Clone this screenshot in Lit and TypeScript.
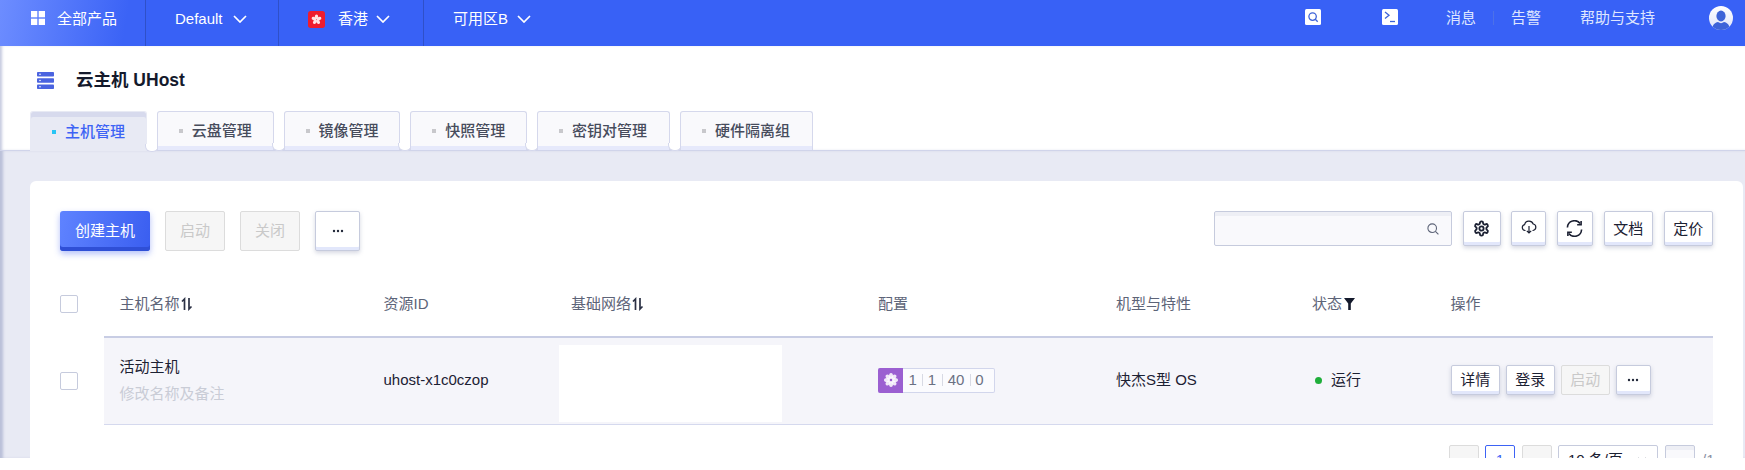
import { LitElement, html, css, svg } from "lit";
import { customElement } from "lit/decorators.js";

const chevron = html`<svg class="chev" width="14" height="8" viewBox="0 0 14 8"><path d="M1 1l6 6 6-6" fill="none" stroke="#fff" stroke-width="1.7"/></svg>`;
const sortIcon = html`<svg class="sort" width="12" height="14" viewBox="0 0 12 14"><path d="M3.5 13V2L1 4.5M8 1v11l2.500-2.500" fill="none" stroke="#2b3145" stroke-width="1.700"/></svg>`;
const dots = html`<svg width="12" height="4" viewBox="0 0 12 4"><circle cx="2" cy="2" r="1.2" fill="#22283a"/><circle cx="6" cy="2" r="1.2" fill="#22283a"/><circle cx="10" cy="2" r="1.2" fill="#22283a"/></svg>`;

const petals = [0, 45, 90, 135, 180, 225, 270, 315].map(
  (a) => svg`<ellipse cx="8" cy="4" rx="2" ry="3" fill="#fff" opacity=".85" transform="rotate(${a} 8 8)"/>`
);

@customElement("app-root")
export class AppRoot extends LitElement {
  static styles = css`
    :host { display: block; width: 100%; height: 470px; background: #fff; overflow: hidden;
      font-family: "Liberation Sans", "Noto Sans CJK SC", sans-serif; font-size: 15px; color: #1c2133; }
    * { box-sizing: border-box; }
    .clip { height: 458px; overflow: hidden; display: flex; flex-direction: column; }
    .top { height: 46px; flex: none; background: #3861f6; color: #fff; display: flex; align-items: stretch; line-height: 22px; }
    .cell { height: 46px; display: flex; align-items: center; padding-bottom: 8px; border-right: 1px solid #2f50c8; }
    .c1 { width: 146px; padding-left: 31px; gap: 12px; background: linear-gradient(100deg, #6d8dff, #3b63f6 85%); }
    .c1 svg { margin-bottom: 2px; }
    .c2 { width: 133px; padding-left: 29px; gap: 10px; }
    .c3 { width: 145px; padding-left: 29px; }
    .c3 .name { margin: 0 8px 0 13px; }
    .c4 { padding-left: 29px; gap: 9px; border-right: 0; }
    .chev { display: block; }
    .right { margin-left: auto; display: flex; align-items: center; padding: 0 12px 10px 0; color: #dfe6ff; }
    .right .i1, .right .i2 { margin-bottom: 2px; }
    .right .i1 { margin-right: 61px; }
    .right .i2 { margin-right: 48px; }
    .vsep { width: 1px; height: 14px; background: #4d71e8; margin: 0 17px; }
    .help { margin: 0 54px 0 39px; }
    .head { flex: none; height: 105px; background: #fff; padding: 0 0 0 30px; display: flex; flex-direction: column;
      border-bottom: 1px solid #d0d4ea; box-shadow: inset 3px 0 3px -1px #c5cadf; }
    .title { display: flex; align-items: center; height: 65px; padding: 3px 0 0 7px; font-size: 17.5px; font-weight: 700; color: #141a2c; gap: 22px; line-height: 24px; }
    .title svg { display: block; }
    .tabs { display: flex; gap: 10px; height: 39px; }
    .tab { position: relative; width: 116.75px; height: 39px; padding-left: 21px; display: flex; align-items: center; gap: 9px;
      background: #f9f9fc; border: 1px solid #d5d8ec; border-bottom: 0; border-radius: 3px 3px 0 0;
      box-shadow: inset 0 -4px 0 #e6e9fb; color: #474c5c; font-weight: 500; line-height: 22px; }
    .tab.w2 { width: 133px; }
    .tab::after { content: ""; position: absolute; left: 100%; bottom: -1px; width: 12px; height: 7px; margin-left: -1px; background: #fff;
      border: 1px solid #d5d8ec; border-top: 0; border-radius: 0 0 6px 6px; }
    .tab:last-child::after { display: none; }
    .tab .sq { width: 4px; height: 4px; background: #c8c8cc; }
    .tab.on { background: #e8eaf4; box-shadow: inset 0 5px 0 #d7daed; color: #3d63f5; margin-bottom: -1px; height: 40px; border-color: #e8eaf4; }
    .tab.on .sq { background: #28c5f5; }
    .main { flex: 1; min-height: 0; background: #e8eaf4; padding: 30px 2px 0 30px; box-shadow: inset 4px 0 3px -1px #b9bfd8; overflow: hidden; }
    .card { background: #fff; border-radius: 6px 6px 0 0; padding: 30px 30px 0; height: 300px; overflow: hidden; }
    .bar { display: flex; justify-content: space-between; align-items: flex-start; height: 40px; }
    .grp { display: flex; gap: 15px; }
    .grp.r { gap: 10.5px; }
    .btn { height: 35px; min-width: 35px; display: flex; align-items: center; justify-content: center; background: #fff; line-height: 20px;
      border: 1px solid #c6cbdd; border-radius: 2px; box-shadow: inset 0 -3px 0 #e2e7fb, 0 2px 4px rgba(90,100,140,.25); color: #1c2133; }
    .btn svg { display: block; }
    .grp:not(.r) .btn { height: 40px; }
    .primary { width: 90px; color: #fff; border: 0; background: linear-gradient(100deg, #5f83ff, #3a5ef0); border-radius: 3px;
      box-shadow: inset 0 -4px 0 #2f4fd6, 0 3px 6px rgba(70,100,240,.4); }
    .off { width: 60px; color: #c9c9c9; background: #f6f6f6; border-color: #dcdcdc; box-shadow: none; }
    .more { width: 45px; }
    .search { width: 238px; height: 35px; border: 1px solid #c6cbdd; border-radius: 2px; background: #f9f9fc; box-shadow: inset 0 4px 0 #eeeff5;
      display: flex; align-items: center; justify-content: flex-end; padding-right: 12px; }
    .w38 { width: 38px; } .w35 { width: 35px; } .w36 { width: 36.5px; } .w49 { width: 49.5px; }
    .thead, .tr { display: flex; }
    .thead { height: 34px; margin: 36px 0 15px; align-items: center; color: #5d6478; line-height: 20px; }
    .chk { width: 44px; flex: none; }
    .chk i { display: block; width: 18px; height: 18px; background: #fff; border: 1px solid #c6cbdd; border-radius: 2px; }
    .cols { flex: 1; display: grid; grid-template-columns: 279.5px 172.5px 322px 238px 196px 138.5px 1fr; align-items: center; }
    .cols > div { padding-left: 0; display: flex; align-items: center; }
    .cols > div:first-child { padding-left: 15.5px; }
    .thead .cols > div:nth-child(3) { padding-left: 15px; }
    .sort { margin-left: 1px; }
    .tr { height: 89px; align-items: center; }
    .row { height: 89px; background: #f5f5fa; border-top: 2px solid #c8cde4; border-bottom: 1px solid #d5d9ee; line-height: 22px; }
    .namecell { flex-direction: column; align-items: flex-start !important; gap: 5px; }
    .note { color: #c9ccd6; }
    .blank { height: 77px; width: 223px; background: #fff; margin: 6px 0 0 3px; }
    .badge { display: flex; width: 117px; height: 25px; border: 1px solid #d2d6ec; border-left: 0; border-radius: 2px; background: #fbfbfe; align-items: center; color: #6b7183; }
    .badge .ic { width: 25px; height: 25px; background: #9b5fd1; display: flex; align-items: center; justify-content: center; border-radius: 2px 0 0 2px; flex: none; }
    .badge span { text-align: center; }
    .badge b { width: 1px; height: 12px; background: #d8dae4; }
    .n1 { width: 17.5px; margin-left: 1px; } .n2 { width: 19px; } .n3 { width: 27px; } .n4 { width: 18px; }
    .status { gap: 9px; }
    .dot { width: 7px; height: 7px; border-radius: 50%; background: #1fae3a; margin-left: 3px; }
    .ops { display: flex; gap: 5.5px; }
    .ops .btn { height: 30px; width: 49.5px; }
    .ops .mini { width: 35px; }
    .pager { display: flex; justify-content: flex-end; align-items: flex-start; margin-top: 20px; gap: 7px; height: 32px; line-height: 30px; }
    .pg { width: 30px; height: 30px; display: flex; align-items: center; justify-content: center; border: 1px solid #dcdcdc; border-radius: 2px; background: #f6f6f6; color: #bbb; }
    .pg.first { margin-right: -1px; }
    .pg.cur { background: #fff; border-color: #3d63f5; color: #3d63f5; }
    .sel { width: 100px; height: 30px; margin-left: -1px; border: 1px solid #c6cbdd; border-radius: 2px; background: #fff; padding: 0 10px 0 9px; display: flex; align-items: center; justify-content: space-between; }
    .inp { width: 30px; height: 30px; border: 1px solid #c6cbdd; border-radius: 2px; background: #f9f9fc; box-shadow: inset 0 4px 0 #eeeff5; }
    .tot { color: #8b90a3; width: 12px; margin-right: -1px; }
  `;

  render() {
    const tabs = ["主机管理", "云盘管理", "镜像管理", "快照管理", "密钥对管理", "硬件隔离组"];
    return html`<div class="clip">
      <div class="top">
        <div class="cell c1">
          <svg width="14" height="14" viewBox="0 0 14 14" fill="#fff"><rect width="6.3" height="6.3"/><rect x="7.7" width="6.3" height="6.3"/><rect y="7.7" width="6.3" height="6.3"/><rect x="7.7" y="7.7" width="6.3" height="6.3"/></svg>
          <span>全部产品</span>
        </div>
        <div class="cell c2"><span>Default</span>${chevron}</div>
        <div class="cell c3">
          <svg width="17" height="17" viewBox="0 0 16 16"><rect width="16" height="16" rx="2.5" fill="#ee1c2e"/><g transform="translate(3.2 3.2) scale(.6)">${[0,72,144,216,288].map((a)=>svg`<ellipse cx="8" cy="3.8" rx="2.6" ry="3.8" fill="#ffe3e3" transform="rotate(${a} 8 8)"/>`)}</g></svg>
          <span class="name">香港</span>${chevron}
        </div>
        <div class="cell c4"><span>可用区B</span>${chevron}</div>
        <div class="right">
          <svg class="i1" width="16" height="16" viewBox="0 0 16 16"><rect width="16" height="16" rx="1.5" fill="#fff"/><circle cx="7.6" cy="7.6" r="3.7" fill="none" stroke="#3d63d8" stroke-width="1.3"/><path d="M10.3 10.3l2.4 2.4" stroke="#3d63d8" stroke-width="1.3"/></svg>
          <svg class="i2" width="16" height="16" viewBox="0 0 16 16"><rect width="16" height="16" rx="1.5" fill="#fff"/><path d="M3 3l4 3.2-4 3.2" fill="none" stroke="#3d63d8" stroke-width="1.3"/><path d="M8 12.5h5" stroke="#3d63d8" stroke-width="1.3"/></svg>
          <span>消息</span><i class="vsep"></i><span>告警</span><span class="help">帮助与支持</span>
          <svg width="24" height="24" viewBox="0 0 24 24"><defs><clipPath id="av"><circle cx="12" cy="12" r="12"/></clipPath><linearGradient id="avg" x1="0" y1="0" x2="0" y2="1"><stop offset="0" stop-color="#fff"/><stop offset="1" stop-color="#dde3fb"/></linearGradient></defs><circle cx="12" cy="12" r="12" fill="url(#avg)"/><g clip-path="url(#av)" fill="#3d63d8"><ellipse cx="12" cy="10" rx="4.6" ry="5.4"/><path d="M3 24c0-5 3-7.500 6-8 2 1.500 4 1.500 6 0 3 .5 6 3 6 8z"/></g></svg>
        </div>
      </div>

      <div class="head">
        <div class="title">
          <svg width="17" height="17" viewBox="0 0 17 17" fill="#4a63e0"><rect width="17" height="4.600" rx=".8"/><rect y="6.200" width="17" height="4.600" rx=".8"/><rect y="12.400" width="17" height="4.600" rx=".8"/><circle cx="3" cy="2.300" r=".8" fill="#fff"/><circle cx="3" cy="8.500" r=".8" fill="#fff"/><circle cx="3" cy="14.700" r=".8" fill="#fff"/></svg>
          <span>云主机 UHost</span>
        </div>
        <div class="tabs">
          ${tabs.map((t, i) => html`<div class="tab ${i === 0 ? "on" : ""} ${t.length > 4 ? "w2" : ""}"><i class="sq"></i><span>${t}</span></div>`)}
        </div>
      </div>

      <div class="main">
        <div class="card">
          <div class="bar">
            <div class="grp">
              <div class="btn primary">创建主机</div>
              <div class="btn off">启动</div>
              <div class="btn off">关闭</div>
              <div class="btn more">${dots}</div>
            </div>
            <div class="grp r">
              <div class="search"><svg width="12" height="12" viewBox="0 0 12 12"><circle cx="5.200" cy="5.200" r="4.300" fill="none" stroke="#5d6478" stroke-width="1.100"/><path d="M8.400 8.400l3 3" stroke="#5d6478" stroke-width="1.100"/></svg></div>
              <div class="btn w38"><svg width="17" height="17" viewBox="0 0 24 24" fill="none" stroke="#1c2133" stroke-width="2.600"><path d="M12.220 2h-.44a2 2 0 0 0-2 2v.18a2 2 0 0 1-1 1.730l-.43.25a2 2 0 0 1-2 0l-.15-.08a2 2 0 0 0-2.730.73l-.22.38a2 2 0 0 0 .73 2.730l.15.1a2 2 0 0 1 1 1.720v.51a2 2 0 0 1-1 1.740l-.15.09a2 2 0 0 0-.73 2.730l.22.38a2 2 0 0 0 2.730.73l.15-.08a2 2 0 0 1 2 0l.43.25a2 2 0 0 1 1 1.730V20a2 2 0 0 0 2 2h.44a2 2 0 0 0 2-2v-.18a2 2 0 0 1 1-1.730l.43-.25a2 2 0 0 1 2 0l.15.08a2 2 0 0 0 2.730-.73l.22-.39a2 2 0 0 0-.73-2.730l-.15-.08a2 2 0 0 1-1-1.740v-.5a2 2 0 0 1 1-1.740l.15-.09a2 2 0 0 0 .73-2.730l-.22-.38a2 2 0 0 0-2.730-.73l-.15.08a2 2 0 0 1-2 0l-.43-.25a2 2 0 0 1-1-1.730V4a2 2 0 0 0-2-2z"/><circle cx="12" cy="12" r="3"/></svg></div>
              <div class="btn w35"><svg style="margin-bottom:3px" width="16" height="14" viewBox="0 0 16 14"><path d="M4.500 10.500H4A3 3 0 0 1 3.600 4.600 4.500 4.500 0 0 1 12.200 4 3.300 3.300 0 0 1 12 10.500h-.5" fill="none" stroke="#1c2133" stroke-width="1.200"/><path d="M8 6v7M5.800 10.800L8 13 10.200 10.800" fill="none" stroke="#1c2133" stroke-width="1.200"/></svg></div>
              <div class="btn w36"><svg width="19" height="17" viewBox="0 0 19 18"><path d="M2 8a7.500 7.500 0 0 1 13.500-4.200M17 10A7.500 7.500 0 0 1 3.500 14.200" fill="none" stroke="#1c2133" stroke-width="1.700"/><path d="M16.500 1v4h-4.200M2.500 17v-4h4.200" fill="none" stroke="#1c2133" stroke-width="1.700"/></svg></div>
              <div class="btn w49">文档</div>
              <div class="btn w49">定价</div>
            </div>
          </div>

          <div class="thead">
            <div class="chk"><i></i></div>
            <div class="cols">
              <div>主机名称${sortIcon}</div><div>资源ID</div><div>基础网络${sortIcon}</div><div>配置</div><div>机型与特性</div>
              <div>状态<svg style="margin-left:2px" width="11" height="12" viewBox="0 0 11 12"><path d="M0 0h11L6.800 5.500V12H4.200V5.500z" fill="#141a2c"/></svg></div>
              <div>操作</div><div></div>
            </div>
          </div>

          <div class="tr">
            <div class="chk"><i></i></div>
            <div class="cols row">
              <div class="namecell"><span>活动主机</span><span class="note">修改名称及备注</span></div>
              <div>uhost-x1c0czop</div>
              <div><div class="blank"></div></div>
              <div><div class="badge">
                <div class="ic"><svg width="16" height="16" viewBox="0 0 16 16">${petals}<circle cx="8" cy="8" r="1.200" fill="#9b5fd1"/></svg></div>
                <span class="n1">1</span><b></b><span class="n2">1</span><b></b><span class="n3">40</span><b></b><span class="n4">0</span>
              </div></div>
              <div>快杰S型 OS</div>
              <div class="status"><i class="dot"></i><span>运行</span></div>
              <div class="ops">
                <div class="btn">详情</div><div class="btn">登录</div><div class="btn off">启动</div><div class="btn mini">${dots}</div>
              </div>
              <div></div>
            </div>
          </div>

          <div class="pager">
            <div class="pg first">‹</div>
            <div class="pg cur">1</div>
            <div class="pg">›</div>
            <div class="sel"><span>10 条/页</span><svg width="10" height="6" viewBox="0 0 10 6"><path d="M1 1l4 4 4-4" fill="none" stroke="#5d6478" stroke-width="1.200"/></svg></div>
            <div class="inp"></div>
            <div class="tot">/1</div>
          </div>
        </div>
      </div>
    </div>`;
  }
}
